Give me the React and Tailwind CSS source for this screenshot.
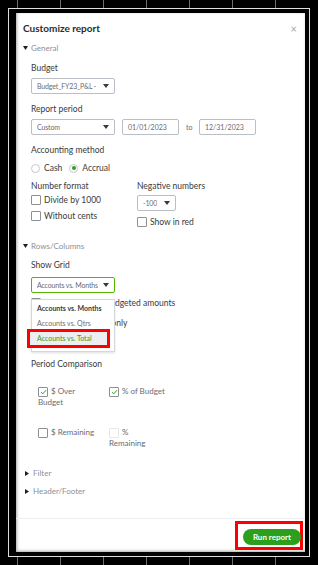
import React from "react";

const Caret = () => (
  <svg width="6" height="4" viewBox="0 0 6 4" className="shrink-0">
    <path d="M0 0h6L3 4z" fill="#393a3d" />
  </svg>
);

const Tri = ({ open }) =>
  open ? (
    <svg width="5" height="4" viewBox="0 0 5 4" className="shrink-0">
      <path d="M0 0h5L2.5 4z" fill="#1f1f1f" />
    </svg>
  ) : (
    <svg width="4" height="5" viewBox="0 0 4 5" className="shrink-0 ml-[2px]">
      <path d="M0 0l4 2.5L0 5z" fill="#1f1f1f" />
    </svg>
  );

function SectionHead({ open, label, className }) {
  return (
    <div className={`h-[12px] flex items-center gap-[3px] ${className}`}>
      <Tri open={open} />
      <span className={`text-[8px] text-[#8d9096] ${open ? "" : "ml-[1px]"}`}>{label}</span>
    </div>
  );
}

function Label({ children, className }) {
  return (
    <div className={`h-[12px] flex items-center text-[8.5px] text-[#393a3d] ${className}`}>
      {children}
    </div>
  );
}

function Select({ value, className, green }) {
  return (
    <div
      className={`h-[16px] flex items-center justify-between gap-[2px] pl-[5px] pr-[5px] bg-white rounded-[2px] border ${
        green ? "border-[#53b700]" : "border-[#babec5]"
      } ${className}`}
    >
      <span className="text-[7px] tracking-[-0.15px] text-[#6b6c72] whitespace-nowrap overflow-hidden">{value}</span>
      <Caret />
    </div>
  );
}

function Box({ checked, disabled }) {
  return (
    <span
      className={`w-[10px] h-[10px] shrink-0 inline-flex items-center justify-center bg-white rounded-[1px] border ${
        disabled ? "border-[#e6e7ea]" : "border-[#8d9096]"
      }`}
    >
      {checked && (
        <svg width="7" height="6" viewBox="0 0 7 6">
          <path d="M1 3.2l1.8 1.6L6 1.2" fill="none" stroke="#2ca01c" strokeWidth="1" />
        </svg>
      )}
    </span>
  );
}

function Check({ label, className }) {
  return (
    <div className={`h-[12px] flex items-center gap-[3px] ${className}`}>
      <Box />
      <span className="text-[8.5px] text-[#393a3d] whitespace-nowrap">{label}</span>
    </div>
  );
}

function GridStrip() {
  return (
    <div className="h-[8px] flex pl-[17px]">
      {[0, 1, 2, 3, 4, 5, 6].map((i) => (
        <div key={i} className="w-[45px] h-full border-l border-[#6e6e6e]" />
      ))}
    </div>
  );
}

export default function App() {
  return (
    <div className="w-[318px] h-[565px] bg-black flex flex-col overflow-hidden font-['Lato',sans-serif]">
      <GridStrip />
      <div className="h-[549px] flex">
        <div className="w-[8px]" />
        <div className="w-[302px] h-full border border-[#dedede] bg-black pt-[4px] pl-[7px] pr-[4px] pb-[4px]">
          <div className="w-full h-full bg-white flex flex-col shadow-[inset_1px_-1px_3px_rgba(0,0,0,0.35)]">
            <div className="flex-1 pl-[7px]">
              <div className="mt-[9px] h-[12px] flex items-center justify-between pr-[8px]">
                <span className="text-[10px] font-bold text-[#2b2c2f]">Customize report</span>
                <span className="text-[11px] text-[#a3a5aa] leading-none">×</span>
              </div>

              <SectionHead open label="General" className="mt-[8px]" />
              <div className="pl-[8px]">
                <Label className="mt-[8px]">Budget</Label>
                <Select className="mt-[4px] w-[84px]" value="Budget_FY23_P&L -" />

                <Label className="mt-[9px]">Report period</Label>
                <div className="mt-[4px] h-[16px] flex items-center">
                  <Select className="w-[84px]" value="Custom" />
                  <div className="ml-[7px] w-[57px] h-[16px] border border-[#babec5] rounded-[2px] flex items-center pl-[5px] text-[7px] text-[#6b6c72]">
                    01/01/2023
                  </div>
                  <span className="ml-[7px] w-[6px] text-[7px] text-[#6b6c72]">to</span>
                  <div className="ml-[7px] w-[57px] h-[16px] border border-[#babec5] rounded-[2px] flex items-center pl-[5px] text-[7px] text-[#6b6c72]">
                    12/31/2023
                  </div>
                </div>

                <Label className="mt-[9px]">Accounting method</Label>
                <div className="mt-[6px] h-[12px] flex items-center text-[8.5px] text-[#393a3d]">
                  <span className="w-[9px] h-[9px] rounded-full border border-[#c6c8cc] bg-white" />
                  <span className="ml-[4px]">Cash</span>
                  <span className="ml-[7px] w-[9px] h-[9px] rounded-full border border-[#c6c8cc] bg-white flex items-center justify-center">
                    <span className="w-[4px] h-[4px] rounded-full bg-[#2ca01c]" />
                  </span>
                  <span className="ml-[4px]">Accrual</span>
                </div>

                <div className="mt-[6px] flex">
                  <div className="w-[106px]">
                    <Label>Number format</Label>
                    <Check className="mt-[2px]" label="Divide by 1000" />
                    <Check className="mt-[4px]" label="Without cents" />
                  </div>
                  <div>
                    <Label>Negative numbers</Label>
                    <Select className="mt-[3px] w-[39px]" value="-100" />
                    <Check className="mt-[5px]" label="Show in red" />
                  </div>
                </div>
              </div>

              <SectionHead open label="Rows/Columns" className="mt-[12px]" />
              <div className="pl-[8px]">
                <Label className="mt-[7px]">Show Grid</Label>
                <Select green className="mt-[6px] w-[84px]" value="Accounts vs. Months" />
                <div className="relative">
                  <Check className="mt-[4px]" label="Show rows with budgeted amounts" />
                  <Check className="mt-[8px]" label="Show active rows only" />

                  <div className="absolute top-[2px] left-0 w-[84px] h-[53px] bg-white border border-[#d4d7dc] shadow-[0_1px_2px_rgba(0,0,0,0.12)] pt-[1px]">
                    <div className="h-[15px] flex items-center pl-[5px] text-[7px] font-bold text-[#393a3d] whitespace-nowrap">
                      Accounts vs. Months
                    </div>
                    <div className="h-[15px] flex items-center pl-[5px] text-[7px] text-[#6b6c72] whitespace-nowrap">
                      Accounts vs. Qtrs
                    </div>
                    <div className="relative h-[15px] flex items-center pl-[5px] text-[7px] text-[#2ca01c] whitespace-nowrap">
                      <div className="absolute left-[-5px] top-[-2px] w-[83px] h-[19px] border-[3px] border-[#ff0000] bg-[#eceef1]" />
                      <span className="relative">Accounts vs. Total</span>
                    </div>
                  </div>
                </div>

                <Label className="mt-[29px]">Period Comparison</Label>
                <div className="mt-[16px] pl-[7px] flex text-[8px] text-[#6b6c72] leading-[11px]">
                  <div className="w-[56px]">
                    <div className="h-[11px] flex items-center gap-[3px]">
                      <Box checked />
                      <span>$ Over</span>
                    </div>
                    <div>Budget</div>
                    <div className="mt-[19px] h-[11px] flex items-center gap-[3px]">
                      <Box />
                      <span className="whitespace-nowrap">$ Remaining</span>
                    </div>
                  </div>
                  <div className="ml-[15px] w-[56px]">
                    <div className="h-[11px] flex items-center gap-[3px]">
                      <Box checked />
                      <span className="whitespace-nowrap">% of Budget</span>
                    </div>
                    <div className="h-[11px]" />
                    <div className="mt-[19px] h-[11px] flex items-center gap-[3px]">
                      <Box disabled />
                      <span>%</span>
                    </div>
                    <div>Remaining</div>
                  </div>
                </div>
              </div>

              <SectionHead label="Filter" className="mt-[18px]" />
              <SectionHead label="Header/Footer" className="mt-[6px]" />
            </div>

            <div className="relative border-t border-[#eceef1] flex justify-end pt-[10px] pb-[7px] pr-[4px]">
              <div className="absolute top-[2px] left-[219px] w-[68px] h-[29px] border-[3px] border-[#ff0000]" />
              <button className="relative w-[58px] h-[16px] rounded-full bg-[#2ca01c] text-white text-[8px] font-bold flex items-center justify-center">
                Run report
              </button>
            </div>
          </div>
        </div>
      </div>
      <GridStrip />
    </div>
  );
}
